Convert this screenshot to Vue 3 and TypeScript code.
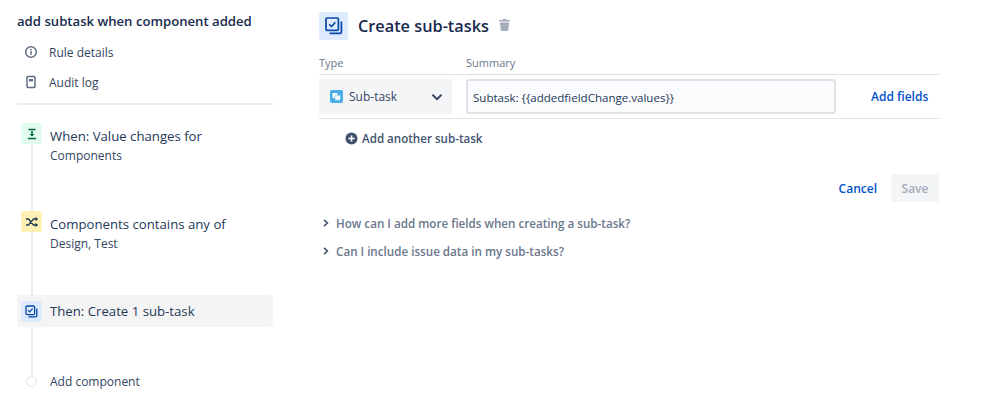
<script setup lang="ts">
interface Fold { id: number; text: string }
const folds: Fold[] = [
  { id: 1, text: 'How can I add more fields when creating a sub-task?' },
  { id: 2, text: 'Can I include issue data in my sub-tasks?' },
]
</script>

<template>
  <div class="page">
    <aside class="side">
      <h2 class="rule-title">add subtask when component added</h2>
      <nav class="side-nav">
        <div class="nav-item">
          <svg class="nav-icon" width="14" height="14" viewBox="0 0 14 14" fill="none">
            <circle cx="7" cy="7" r="5.3" stroke="#5e6c84" stroke-width="1.5" />
            <rect x="6.3" y="6.2" width="1.5" height="3.6" fill="#5e6c84" />
            <rect x="6.3" y="3.9" width="1.5" height="1.5" fill="#5e6c84" />
          </svg>
          <span>Rule details</span>
        </div>
        <div class="nav-item">
          <svg class="nav-icon" width="14" height="14" viewBox="0 0 14 14" fill="none">
            <rect x="3" y="1.5" width="8" height="11" rx="1" stroke="#5e6c84" stroke-width="1.5" />
            <rect x="5" y="4" width="4" height="2.4" fill="#5e6c84" />
          </svg>
          <span>Audit log</span>
        </div>
      </nav>
      <div class="side-rule"></div>
      <div class="flow">
        <div class="flow-line"></div>
        <div class="step step-when">
          <span class="badge badge-green">
            <svg width="12" height="12" viewBox="0 0 12 12" fill="none">
              <path d="M2.5 1.5h7M2 10.5h8" stroke="#006644" stroke-width="1.4" />
              <path d="M6 3v4" stroke="#006644" stroke-width="1.6" />
              <path d="M3.6 5.9h4.8L6 8.6z" fill="#006644" />
            </svg>
          </span>
          <div class="step-text">
            <div class="step-name">When: Value changes for</div>
            <div class="step-sub">Components</div>
          </div>
        </div>
        <div class="step step-if">
          <span class="badge badge-yellow">
            <svg width="14" height="12" viewBox="0 0 14 12" fill="none">
              <path d="M1 3h2.5l5 6H11M1 9h2.5l5-6H11" stroke="#253858" stroke-width="1.3" />
              <path d="M10.5 .8 13.2 3l-2.7 2.2zM10.5 6.8 13.2 9l-2.7 2.2z" fill="#253858" />
            </svg>
          </span>
          <div class="step-text">
            <div class="step-name">Components contains any of</div>
            <div class="step-sub">Design, Test</div>
          </div>
        </div>
        <div class="step step-then">
          <span class="badge badge-blue">
            <svg width="13" height="13" viewBox="0 0 13 13" fill="none">
              <rect x="1" y="1" width="8.6" height="8.6" rx="1" stroke="#0747a6" stroke-width="1.3" />
              <path d="M3 5.2l1.6 1.6L7.6 3.6" stroke="#0747a6" stroke-width="1.2" />
              <path d="M11.8 3.4v7.4a1 1 0 0 1-1 1H3.4" stroke="#0747a6" stroke-width="1.3" />
            </svg>
          </span>
          <div class="step-name">Then: Create 1 sub-task</div>
        </div>
        <div class="step step-add">
          <span class="dot-wrap"><span class="dot"></span></span>
          <div class="add-label">Add component</div>
        </div>
      </div>
    </aside>

    <main class="main">
      <header class="head">
        <span class="head-badge">
          <svg width="18" height="18" viewBox="0 0 18 18" fill="none">
            <rect x="1" y="1" width="12.4" height="12.4" rx="1.2" stroke="#0747a6" stroke-width="1.7" />
            <path d="M4.2 7.2l2.3 2.3 3.9-4.3" stroke="#0747a6" stroke-width="1.6" />
            <path d="M16.4 4.5v10.4a1.4 1.4 0 0 1-1.4 1.4H4.6" stroke="#0747a6" stroke-width="1.7" />
          </svg>
        </span>
        <h1 class="head-title">Create sub-tasks</h1>
        <svg class="trash" width="11" height="12" viewBox="0 0 11 12" fill="#a5adba">
          <path d="M3.8 0h3.4l.5 1H10.5a.5.5 0 0 1 .5.5V2.6H0V1.5A.5.5 0 0 1 .5 1h2.8zM1 3.4h9l-.7 7.7a1 1 0 0 1-1 .9H2.7a1 1 0 0 1-1-.9z" />
        </svg>
      </header>

      <div class="labels">
        <span class="label-type">Type</span>
        <span>Summary</span>
      </div>
      <div class="table-row">
        <div class="select">
          <svg class="type-icon" width="13" height="13" viewBox="0 0 13 13">
            <rect width="13" height="13" rx="2" fill="#4bade8" />
            <rect x="2.5" y="3" width="5" height="5" rx=".7" fill="#fff" />
            <rect x="5" y="5.2" width="5.5" height="5" rx=".7" fill="#fff" stroke="#4bade8" stroke-width=".5" />
          </svg>
          <span class="select-value">Sub-task</span>
          <svg width="14" height="14" viewBox="0 0 14 14" fill="none">
            <path d="M2.5 4.8 7 9.2l4.5-4.4" stroke="#344563" stroke-width="1.9" />
          </svg>
        </div>
        <div class="input">Subtask: &#123;&#123;addedfieldChange.values&#125;&#125;</div>
        <a class="link add-fields">Add fields</a>
      </div>

      <div class="add-another">
        <svg width="13" height="13" viewBox="0 0 13 13">
          <circle cx="6.5" cy="6.5" r="6" fill="#42526e" />
          <path d="M6.5 3.4v6.2M3.4 6.5h6.2" stroke="#fff" stroke-width="1.6" />
        </svg>
        <span>Add another sub-task</span>
      </div>

      <div class="actions">
        <a class="link">Cancel</a>
        <button class="save" type="button">Save</button>
      </div>

      <div class="faq">
        <div v-for="f in folds" :key="f.id" class="faq-row">
          <svg width="6" height="8" viewBox="0 0 6 8" fill="none">
            <path d="M1 .8 4.4 4 1 7.2" stroke="#42526e" stroke-width="1.6" />
          </svg>
          <span>{{ f.text }}</span>
        </div>
      </div>
    </main>
  </div>
</template>

<style scoped>
.page {
  display: flex;
  width: 999px;
  height: 402px;
  overflow: hidden;
  background: #fff;
  color: #172b4d;
  font-family: "Open Sans", "Noto Sans", sans-serif;
  font-size: 12px;
}
.side {
  width: 256px;
  margin-left: 17px;
  flex: none;
}
.rule-title {
  margin: 12px 0 0;
  height: 19px;
  font-size: 13.15px;
  line-height: 19px;
  font-weight: 600;
  white-space: nowrap;
  color: #172b4d;
}
.side-nav {
  margin-top: 6px;
}
.nav-item {
  display: flex;
  align-items: center;
  height: 30px;
  color: #344563;
  font-size: 12px;
}
.nav-icon {
  margin-left: 7px;
  margin-right: 11px;
}
.side-rule {
  height: 2px;
  margin-top: 6px;
  background: #ebecf0;
}
.flow {
  position: relative;
  margin-top: 18px;
}
.flow-line {
  position: absolute;
  left: 14px;
  top: 10px;
  height: 246px;
  width: 2px;
  background: #ebecf0;
}
.step {
  position: relative;
  display: flex;
  align-items: flex-start;
  padding-left: 4px;
}
.badge {
  flex: none;
  display: flex;
  align-items: center;
  justify-content: center;
  width: 21px;
  height: 21px;
  border-radius: 3px;
  margin-right: 8px;
}
.badge-green { background: #e3fcef; }
.badge-yellow { background: #fff0b3; }
.badge-blue { background: #deebff; }
.step-text {
  min-width: 0;
  padding-top: 2px;
}
.step-name {
  font-size: 13.2px;
  line-height: 22px;
  color: #253858;
  white-space: nowrap;
}
.step-sub {
  font-size: 12px;
  line-height: 18px;
  color: #344563;
}
.step-if {
  margin-top: 46px;
}
.step-then {
  margin-top: 42px;
  align-items: center;
  height: 32px;
  border-radius: 4px;
  background: #f4f4f4;
}
.step-add {
  margin-top: 44px;
  align-items: center;
  height: 20px;
}
.dot-wrap {
  width: 21px;
  margin-right: 8px;
  display: flex;
  justify-content: center;
}
.dot {
  width: 11px;
  height: 11px;
  box-sizing: border-box;
  border-radius: 50%;
  background: #fff;
  border: 1.5px solid #dfe1e6;
}
.add-label {
  font-size: 12px;
  color: #344563;
}
.main {
  width: 620px;
  margin-left: 46px;
  flex: none;
}
.head {
  display: flex;
  align-items: center;
  margin-top: 12px;
  height: 28px;
}
.head-badge {
  display: flex;
  align-items: center;
  justify-content: center;
  width: 29px;
  height: 28px;
  border-radius: 3px;
  background: #deebff;
  margin-right: 10px;
}
.head-title {
  margin: 0;
  font-size: 16.3px;
  line-height: 28px;
  font-weight: 600;
  color: #172b4d;
}
.trash {
  margin-left: 10px;
  margin-top: -2px;
}
.labels {
  display: flex;
  margin-top: 15px;
  height: 16px;
  line-height: 16px;
  font-size: 11px;
  font-weight: 500;
  color: #6b778c;
}
.label-type {
  width: 147px;
}
.table-row {
  display: flex;
  align-items: center;
  box-sizing: border-box;
  margin-top: 3px;
  height: 45px;
  border-top: 1.5px solid #dfe1e6;
  border-bottom: 1.5px solid #dfe1e6;
}
.select {
  display: flex;
  align-items: center;
  box-sizing: border-box;
  width: 133px;
  height: 35px;
  padding: 0 8px 0 11px;
  border-radius: 3px;
  background: #f4f5f7;
  margin-right: 14px;
  flex: none;
}
.type-icon { margin-right: 6px; }
.select-value {
  flex: 1;
  font-size: 12px;
  color: #344563;
}
.input {
  box-sizing: border-box;
  width: 370px;
  height: 35px;
  line-height: 33px;
  padding: 0 5px;
  border: 2px solid #dfe1e6;
  border-radius: 3px;
  background: #fafbfc;
  font-size: 11.55px;
  color: #253858;
  flex: none;
}
.link {
  color: #0052cc;
  font-size: 12px;
  font-weight: 600;
}
.add-fields {
  margin-left: 35px;
}
.add-another {
  display: flex;
  align-items: center;
  gap: 4px;
  margin-top: 10px;
  margin-left: 26px;
  height: 18px;
  color: #42526e;
  font-size: 11.6px;
  font-weight: 600;
}
.actions {
  display: flex;
  align-items: center;
  justify-content: flex-end;
  gap: 14px;
  margin-top: 27px;
}
.save {
  width: 48px;
  height: 28px;
  border: 0;
  border-radius: 3px;
  background: #f4f5f7;
  color: #a5adba;
  font: 600 12px "Open Sans", "Noto Sans", sans-serif;
}
.faq {
  margin-top: 7px;
}
.faq-row {
  display: flex;
  align-items: center;
  gap: 7px;
  height: 28px;
  padding-left: 4px;
  color: #6b778c;
  font-size: 11.65px;
  font-weight: 600;
}
</style>
